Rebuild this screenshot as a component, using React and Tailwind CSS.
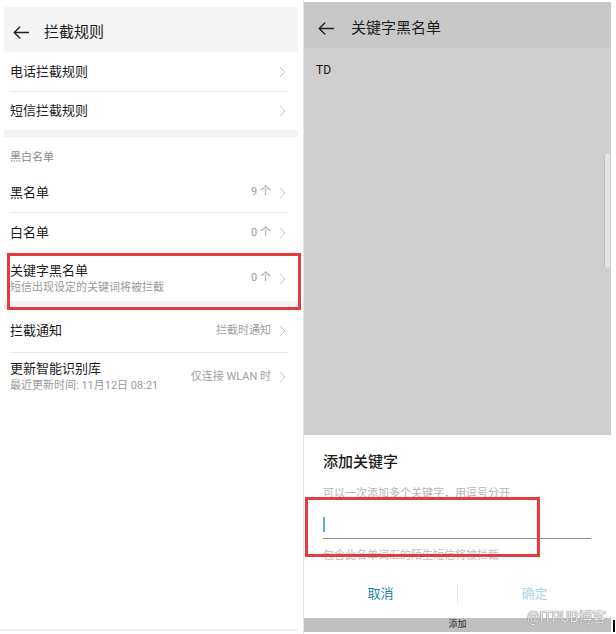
const Chevron = () => (
  <svg width="7" height="12" viewBox="0 0 7 12" className="text-[#c4c4c4] shrink-0">
    <path d="M1 1l5 5-5 5" fill="none" stroke="currentColor" strokeWidth="1" />
  </svg>
);

const BackArrow = ({ className }) => (
  <svg width="16" height="13" viewBox="0 0 16 13" className={className}>
    <path
      d="M15.5 6.5H1.2M6.8 1L1.2 6.5l5.6 5.5"
      fill="none"
      stroke="currentColor"
      strokeWidth="1.4"
      strokeLinecap="round"
      strokeLinejoin="round"
    />
  </svg>
);

// one settings row on the left screen
const Row = ({ title, sub, value, className = "" }) => (
  <div className={`flex items-center justify-between pl-[6px] pr-[12px] ${className}`}>
    <div className="flex flex-col">
      <span className="text-[13px] leading-[18px] text-[#1c1c1c]">{title}</span>
      {sub && <span className="text-[11px] leading-[16px] text-[#9a9a9a]">{sub}</span>}
    </div>
    <div className="flex items-center gap-[8px]">
      {value && <span className="text-[11px] text-[#a0a0a0]">{value}</span>}
      <Chevron />
    </div>
  </div>
);

const Divider = () => <div className="h-px bg-[#ebebeb] ml-[6px] mr-[10px]" />;

export default function App() {
  return (
    <div className="relative w-[616px] h-[634px] bg-white flex overflow-hidden [font-family:'Roboto','Noto_Sans_CJK_SC',sans-serif]">
      {/* left screen: 拦截规则 */}
      <div className="w-[298px] h-full flex flex-col pl-[4px]">
        <div className="mt-[7px] h-[45px] shrink-0 bg-[#f5f5f5] flex items-center pl-[9px] pt-[5px]">
          <BackArrow className="text-[#222]" />
          <span className="ml-[15px] text-[15px] text-[#1a1a1a]">拦截规则</span>
        </div>
        <Row title="电话拦截规则" className="h-[39px]" />
        <Divider />
        <Row title="短信拦截规则" className="h-[38px]" />
        <div className="h-[7px] bg-[#f3f3f3]" />
        <div className="h-[36px] flex items-center pt-[6px] pl-[6px] text-[11px] text-[#8c8c8c]">黑白名单</div>
        <Row title="黑名单" value="9 个" className="h-[39px]" />
        <Divider />
        <Row title="白名单" value="0 个" className="h-[40px]" />
        <Row title="关键字黑名单" sub="短信出现设定的关键词将被拦截" value="0 个" className="h-[48px] pt-[3px]" />
        <div className="h-[6px] bg-[#f3f3f3]" />
        <Row title="拦截通知" value="拦截时通知" className="h-[45px] pt-[3px]" />
        <Divider />
        <Row title="更新智能识别库" sub="最近更新时间: 11月12日 08:21" value="仅连接 WLAN 时" className="h-[48px]" />
        <div className="flex-1" />
        <div className="h-[2px] bg-[#f0f0f0] -ml-[4px] mb-[3px]" />
      </div>

      <div className="w-[6px] border-r border-[#e6e6e6]" />

      {/* right screen: 关键字黑名单 + dialog */}
      <div className="w-[307px] h-full flex flex-col pt-[2px]">
        <div className="h-[46px] shrink-0 bg-[#c8c8c8] flex items-center pl-[14px] pt-[6px]">
          <BackArrow className="text-[#222]" />
          <span className="ml-[17px] text-[15px] text-[#1c1c1c]">关键字黑名单</span>
        </div>
        <div className="relative h-[387px] shrink-0 bg-[#cecece] pt-[14px] pl-[12px]">
          <div className="text-[12px] leading-[16px] text-[#151515]">TD</div>
          <div className="absolute right-[1px] top-[105px] w-[6px] h-[115px] rounded-[3px] bg-[#e4e4e4] border-l border-[#c2c2c2]" />
        </div>
        <div className="h-[183px] shrink-0 bg-white flex flex-col pl-[19px] pr-[20px] pt-[17px]">
          <span className="text-[15px] leading-[20px] font-medium text-[#1a1a1a]">添加关键字</span>
          <span className="mt-[14px] text-[11px] leading-[15px] text-[#b4b4b4]">可以一次添加多个关键字，用逗号分开</span>
          <div className="mt-[12px] h-[26px] border-b border-[#8a8a8a] flex items-end pb-[6px]">
            <div className="w-[2px] h-[15px] bg-[#57b3cf]" />
          </div>
          <span className="mt-[9px] text-[11px] leading-[15px] text-[#bdbdbd]">包含此名单词汇的陌生短信将被拦截</span>
          <div className="mt-[11px] h-[40px] flex items-center -ml-[19px] -mr-[20px]">
            <span className="w-[153px] text-center text-[13px] text-[#1c85a6]">取消</span>
            <div className="w-px h-[20px] bg-[#e6e6e6]" />
            <span className="flex-1 text-center text-[13px] text-[#a9d6e6]">确定</span>
          </div>
        </div>
        <div className="h-[14px] shrink-0 bg-[#c0c0c0] flex items-center justify-center text-[9px] text-[#222]">添加</div>
        <div className="flex-1" />
      </div>

      {/* red annotation boxes */}
      <div className="absolute left-[7px] top-[253px] w-[294px] h-[57px] border-[3px] border-[#e63a3e]" />
      <div className="absolute left-[305px] top-[497px] w-[235px] h-[60px] border-[3px] border-[#e63a3e]" />

      {/* watermark */}
      <span className="absolute left-[527px] top-[609px] text-[14px] leading-[16px] text-[#ececec] [text-shadow:0_0_1px_#777,0_0_1px_#777]">
        @ITPUB博客
      </span>
      <div className="absolute left-[613px] top-[620px] w-[2px] h-[12px] bg-black" />
    </div>
  );
}
